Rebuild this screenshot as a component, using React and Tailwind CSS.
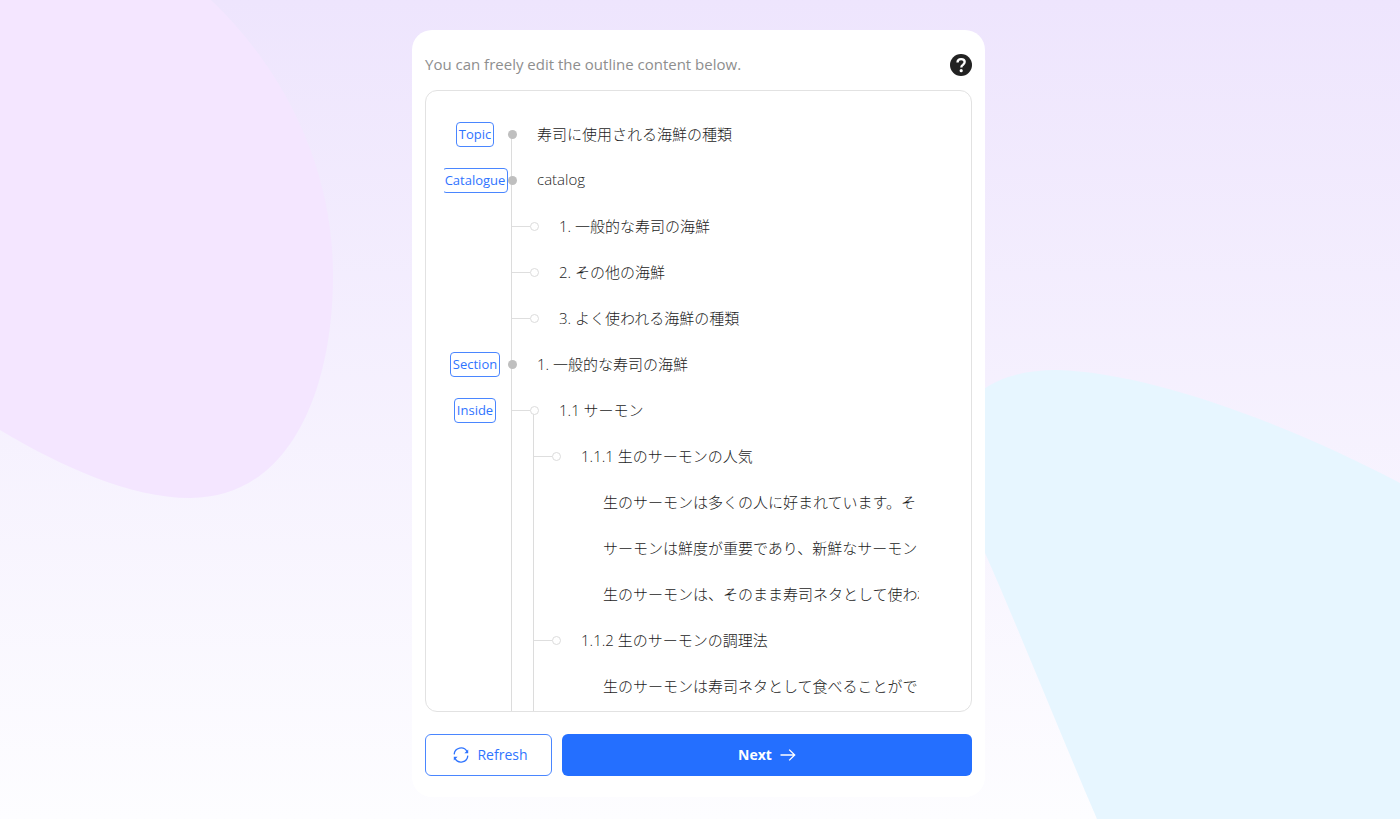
import React from "react";

const ROWS = [
  { tag: "Topic", level: 0, node: "solid", text: "寿司に使用される海鮮の種類", lines: ["down"] },
  { tag: "Catalogue", level: 0, node: "solid", text: "catalog", lines: ["full"] },
  { level: 1, node: "ring", text: "1. 一般的な寿司の海鮮", lines: ["full", "none"] },
  { level: 1, node: "ring", text: "2. その他の海鮮", lines: ["full", "none"] },
  { level: 1, node: "ring", text: "3. よく使われる海鮮の種類", lines: ["full", "none"] },
  { tag: "Section", level: 0, node: "solid", text: "1. 一般的な寿司の海鮮", lines: ["full"] },
  { tag: "Inside", level: 1, node: "ring", text: "1.1 サーモン", lines: ["full", "down"] },
  { level: 2, node: "ring", text: "1.1.1 生のサーモンの人気", lines: ["full", "full", "none"] },
  { level: 3, text: "生のサーモンは多くの人に好まれています。そ", lines: ["full", "full", "none", "none"] },
  { level: 3, text: "サーモンは鮮度が重要であり、新鮮なサーモン", lines: ["full", "full", "none", "none"] },
  { level: 3, text: "生のサーモンは、そのまま寿司ネタとして使われ", lines: ["full", "full", "none", "none"] },
  { level: 2, node: "ring", text: "1.1.2 生のサーモンの調理法", lines: ["full", "full", "none"] },
  { level: 3, text: "生のサーモンは寿司ネタとして食べることがで", lines: ["full", "full", "none", "none"] },
];

const LINE_SPAN = {
  full: "inset-y-0",
  down: "top-1/2 bottom-0",
};

function Guide({ line, branch, node }) {
  return (
    <span className="relative flex w-[22px] shrink-0 items-center self-stretch">
      {line !== "none" && (
        <span className={`absolute left-[3px] w-px bg-[#dcdcdc] ${LINE_SPAN[line]}`} />
      )}
      {branch && <span className="absolute top-1/2 right-0 left-[4px] h-px bg-[#dedede]" />}
      {node === "solid" && <span className="relative size-[9px] rounded-full bg-[#bfbfbf]" />}
      {node === "ring" && (
        <span className="relative size-[9px] rounded-full border border-[#dcdcdc] bg-white" />
      )}
    </span>
  );
}

function OutlineRow({ row }) {
  return (
    <li className="flex h-[46px] items-center">
      <span className="mr-[2px] flex w-[62px] shrink-0 justify-center">
        {row.tag && (
          <span className="shrink-0 rounded border border-[#4a86ff] px-[2px] text-[13px] leading-[23px] text-[#2f74ff]">
            {row.tag}
          </span>
        )}
      </span>
      {row.lines.map((line, i) => (
        <Guide
          key={i}
          line={line}
          branch={Boolean(row.node) && i === row.level - 1}
          node={i === row.level ? row.node : undefined}
        />
      ))}
      <input
        type="text"
        aria-label={row.text}
        defaultValue={row.text}
        className="ml-[7px] h-8 min-w-0 flex-1 bg-transparent pb-[2px] text-[15px] font-light text-[#1c1c1c] outline-none"
      />
    </li>
  );
}

function HelpIcon() {
  return (
    <svg viewBox="0 0 22 22" className="size-[22px]" aria-hidden="true">
      <circle cx="11" cy="11" r="11" fill="#222" />
      <path
        d="M7.5 8.5C7.5 6.3 9 5.1 11.1 5.1c2.1 0 3.6 1.1 3.6 3 0 1.4-.8 2-1.8 2.8-1 .7-1.6 1.2-1.6 2.6"
        fill="none"
        stroke="#fff"
        strokeWidth="2.3"
      />
      <circle cx="11.2" cy="16.7" r="1.6" fill="#fff" />
    </svg>
  );
}

function RefreshIcon() {
  return (
    <svg viewBox="0 0 16 16" className="size-4" fill="none" stroke="currentColor" aria-hidden="true">
      <path d="M1.2 7.4A6.8 6.8 0 0 1 14 4.6M14.8 8.6A6.8 6.8 0 0 1 2 11.4" strokeWidth="1.3" />
      <path d="M15.2 2.4v3.8h-3.8zM.8 13.6V9.8h3.8z" fill="currentColor" stroke="none" />
    </svg>
  );
}

function ArrowIcon() {
  return (
    <svg
      viewBox="0 0 16 12"
      className="h-3 w-4"
      fill="none"
      stroke="currentColor"
      strokeWidth="1.3"
      aria-hidden="true"
    >
      <path d="M.5 6h14.2M9.2.6 14.7 6l-5.5 5.4" />
    </svg>
  );
}

function Backdrop() {
  return (
    <svg
      viewBox="0 0 1400 819"
      preserveAspectRatio="none"
      className="absolute inset-0 h-full w-full"
      aria-hidden="true"
    >
      <path
        d="M0 0H211C290 75 333 175 333 275C333 390 290 498 190 498C130 498 60 466 0 430Z"
        fill="#f4e6ff"
      />
      <path
        d="M980 392C1000 376 1028 370 1056 370C1150 372 1290 425 1400 483V819H1097C1060 733 1020 632 985 553Z"
        fill="#e7f6ff"
      />
    </svg>
  );
}

export default function App() {
  return (
    <div className="relative flex min-h-screen flex-col bg-linear-to-b from-[#eee5fd] to-[#fdfdff] pt-[30px] pr-[3px] pb-[22px] font-['Open_Sans','Noto_Sans_CJK_JP',sans-serif]">
      <Backdrop />
      <main className="relative mx-auto flex w-full max-w-[573px] flex-1 flex-col rounded-[20px] bg-white px-[13px] pt-6 pb-[21px]">
        <header className="mb-[14px] flex h-[22px] items-center justify-between">
          <p className="pb-[2px] text-[15px] text-[#8e8e8e]">You can freely edit the outline content below.</p>
          <button type="button" aria-label="Help">
            <HelpIcon />
          </button>
        </header>

        <section className="flex flex-1 flex-col overflow-hidden rounded-xl border border-[#e2e2e2] pt-5 pr-[52px] pl-[18px]">
          <ul className="overflow-hidden">
            {ROWS.map((row, i) => (
              <OutlineRow key={i} row={row} />
            ))}
          </ul>
          <div className="flex flex-1 pl-16" aria-hidden="true">
            <Guide line="full" />
            <Guide line="full" />
          </div>
        </section>

        <footer className="mt-[22px] flex gap-[10px]">
          <button
            type="button"
            className="flex h-[42px] w-[127px] items-center justify-center gap-2 rounded-md border border-[#4a86ff] pl-1 text-sm text-[#2f74ff]"
          >
            <RefreshIcon />
            Refresh
          </button>
          <button
            type="button"
            className="flex h-[42px] flex-1 items-center justify-center gap-2 rounded-md bg-[#246fff] text-sm font-bold text-white"
          >
            Next
            <ArrowIcon />
          </button>
        </footer>
      </main>
    </div>
  );
}
